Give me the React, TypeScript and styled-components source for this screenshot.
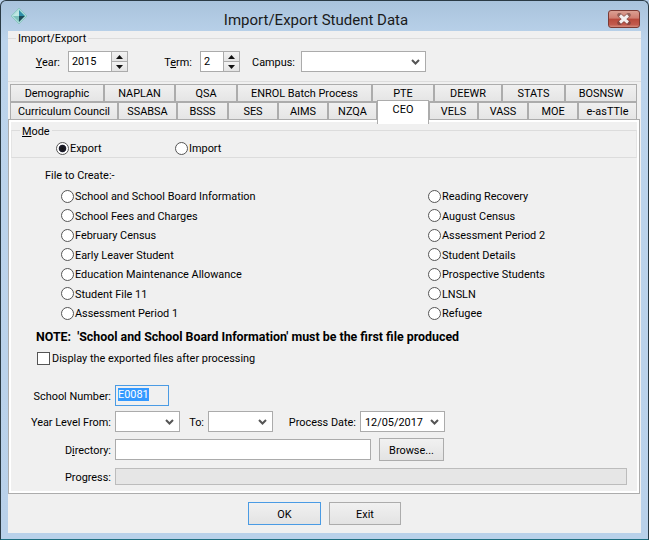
import styled, { createGlobalStyle } from 'styled-components';

const GlobalStyle = createGlobalStyle`
    html, body {
        margin: 0;
        padding: 0;
        background: #b9d1ea;
    }
    * {
        box-sizing: border-box;
    }
`

const Window = styled.div`
    width: 649px;
    height: 540px;
    display: flex;
    flex-direction: column;
    overflow: hidden;
    font-family: Roboto, "Noto Sans", sans-serif;
    font-size: 10.9px;
    color: #000;
    background: linear-gradient(#a9c3dc, #bcd4ec 40px, #b9d1ea);
    border: 1px solid #2a3a44;
    border-bottom-color: #1f6f80;
    border-radius: 6px 6px 0 0;
`

const TitleBar = styled.div`
    height: 30px;
    flex: none;
    display: flex;
    align-items: center;
    padding: 0 8px 0 9px;
`

const Title = styled.div`
    flex: 1;
    text-align: center;
    font-size: 15px;
    color: #1a1a1a;
    padding: 8px 4px 0 0;
`

const CloseButton = styled.div`
    width: 32px;
    height: 18px;
    margin-top: 6px;
    display: flex;
    align-items: center;
    justify-content: center;
    border: 1px solid #7b3a34;
    border-radius: 3px;
    background: linear-gradient(#dba093, #cf7d70 45%, #b8493b 50%, #c25a4e 85%, #d58c7e);
`

const Body = styled.div`
    margin: 0 7px 6px 7px;
    flex: 1;
    display: flex;
    flex-direction: column;
    background: #f0f0f0;
`

const Group = styled.fieldset`
    margin: 0;
    padding: 6px 0 0 0;
    min-width: 0;
    height: 51px;
    border: 1px solid #dcdcdc;
    border-left: none;
    border-right: none;
    display: flex;
    align-items: flex-start;
`

const GroupLegend = styled.legend`
    margin-left: 8px;
    padding: 0 2px;
    height: 14px;
    line-height: 16px;
`

const ModeGroup = styled.fieldset`
    margin: 0 2px 0 0;
    padding: 3px 0 0 0;
    min-width: 0;
    height: 35px;
    border: 1px solid #dcdcdc;
    border-left-color: #e4e4e4;
    border-right-color: #e4e4e4;
    display: flex;
    align-items: flex-start;
`

const ModeLegend = styled.legend`
    margin-left: 8px;
    padding: 0 2px;
    height: 14px;
    line-height: 17px;
`

const FieldLabel = styled.label<{ $width: number; $gap: number }>`
    width: ${props => props.$width}px;
    height: 21px;
    margin-right: ${props => props.$gap}px;
    line-height: 23px;
    text-align: right;
    white-space: nowrap;
`

const SpinBox = styled.div<{ $width: number }>`
    width: ${props => props.$width}px;
    height: 21px;
    display: flex;
    background: #fff;
    border: 1px solid #ababab;
`

const SpinValue = styled.div`
    flex: 1;
    line-height: 20px;
    padding-left: 3px;
`

const SpinButtons = styled.div`
    width: 16px;
    display: flex;
    flex-direction: column;
    gap: 1px;
    background: #ababab;
    border-left: 1px solid #ababab;
`

const SpinButton = styled.div`
    flex: 1;
    display: flex;
    align-items: center;
    justify-content: center;
    background: linear-gradient(#f2f2f2, #e4e4e4);
`

const Combo = styled.div<{ $width: number }>`
    width: ${props => props.$width}px;
    height: 21px;
    display: flex;
    align-items: center;
    flex: none;
    padding: 0 5px 0 4px;
    background: #fff;
    border: 1px solid #ababab;
`

const ComboValue = styled.div`
    flex: 1;
    padding-top: 1px;
    white-space: nowrap;
`

const Tabs = styled.div`
    margin: 2px 2px 0 2px;
    display: flex;
    flex-direction: column;
`

const TabRow = styled.div`
    height: 18px;
    display: flex;
`

const Tab = styled.div<{ $width: number; $active?: boolean }>`
    width: ${props => props.$width}px;
    height: ${props => (props.$active ? 24 : 18)}px;
    margin-top: ${props => (props.$active ? -2 : 0)}px;
    padding: ${props => (props.$active ? '0 0 7px' : '1px 0 0')};
    z-index: ${props => (props.$active ? 2 : 0)};
    display: flex;
    align-items: center;
    justify-content: center;
    white-space: nowrap;
    background: ${props => (props.$active ? '#fff' : 'linear-gradient(#f0f0f0, #e5e5e5)')};
    border: 1px solid #acacac;
    border-bottom: ${props => (props.$active ? 'none' : '1px solid #acacac')};
`

const Panel = styled.div`
    height: 375px;
    margin: -1px 1px 0 0;
    z-index: 1;
    display: flex;
    flex-direction: column;
    padding: 3px 0 0 2px;
    background: #f0f0f0;
    border: 1px solid #acacac;
    box-shadow: inset 0 0 0 2px #fff;
`

const ModeRadios = styled.div`
    margin-left: 44px;
    display: grid;
    grid-template-columns: 119px auto;
`

const FilesHeading = styled.div`
    margin: 8px 0 0 34px;
    line-height: 20px;
    height: 16px;
`

const FileGrid = styled.div`
    margin: 6px 0 0 50px;
    display: grid;
    grid-template-columns: 367px 1fr;
`

const FileColumn = styled.div`
    display: flex;
    flex-direction: column;
    gap: 3.5px;
`

const RadioRow = styled.div`
    height: 16px;
    display: flex;
    align-items: center;
    gap: 1px;
    white-space: nowrap;
`

const RadioText = styled.span`
    padding-top: 1px;
`

const RadioDot = styled.span<{ $checked?: boolean }>`
    width: 13px;
    height: 13px;
    flex: none;
    border-radius: 50%;
    border: 1px solid #555;
    background: ${props => (props.$checked
        ? 'radial-gradient(circle, #111 0, #1c1c2c 3.4px, #fff 4.2px)'
        : '#fff')};
`

const Note = styled.div`
    margin: 8px 0 0 25px;
    line-height: 16px;
    font-weight: 700;
    font-size: 12.4px;
`

const CheckRow = styled.div`
    margin: 6px 0 0 26px;
    height: 14px;
    display: flex;
    align-items: center;
    gap: 2px;
`

const CheckBox = styled.span`
    width: 13px;
    height: 13px;
    flex: none;
    background: #fff;
    border: 1px solid #555;
`

const FormRow = styled.div<{ $top: number }>`
    margin-top: ${props => props.$top}px;
    display: flex;
    align-items: center;
`

const SelectedInput = styled.div`
    width: 54px;
    height: 21px;
    padding: 2px;
    background: #f0f0f0;
    border: 1px solid #4a9be4;
`

const SelectedText = styled.span`
    display: block;
    width: 31px;
    height: 13px;
    line-height: 14px;
    color: #fff;
    background: #3399ff;
`

const TextInput = styled.div`
    width: 256px;
    height: 21px;
    background: #fff;
    border: 1px solid #ababab;
`

const ProgressBar = styled.div`
    width: 512px;
    height: 17px;
    background: #e6e6e6;
    border: 1px solid #bcbcbc;
`

const Button = styled.div<{ $width: number; $focused?: boolean }>`
    width: ${props => props.$width}px;
    height: 23px;
    padding-top: 1px;
    display: flex;
    align-items: center;
    justify-content: center;
    background: linear-gradient(#f1f1f1, #e3e3e3);
    border: 1px solid ${props => (props.$focused ? '#4a9be4' : '#acacac')};
`

const BrowseButton = styled(Button)`
    margin-left: 8px;
`

const Footer = styled.div`
    margin: 8px 0 0 240px;
    display: flex;
    gap: 8px;
`

const upperTabs = [
    { label: 'Demographic', width: 94 },
    { label: 'NAPLAN', width: 71 },
    { label: 'QSA', width: 62 },
    { label: 'ENROL Batch Process', width: 135 },
    { label: 'PTE', width: 62 },
    { label: 'DEEWR', width: 68 },
    { label: 'STATS', width: 63 },
    { label: 'BOSNSW', width: 72 },
]

const lowerTabs = [
    { label: 'Curriculum Council', width: 108 },
    { label: 'SSABSA', width: 59 },
    { label: 'BSSS', width: 51 },
    { label: 'SES', width: 50 },
    { label: 'AIMS', width: 50 },
    { label: 'NZQA', width: 49 },
    { label: 'CEO', width: 52, active: true },
    { label: 'VELS', width: 49 },
    { label: 'VASS', width: 50 },
    { label: 'MOE', width: 50 },
    { label: 'e-asTTle', width: 59 },
]

const leftFiles = [
    'School and School Board Information',
    'School Fees and Charges',
    'February Census',
    'Early Leaver Student',
    'Education Maintenance Allowance',
    'Student File 11',
    'Assessment Period 1',
]

const rightFiles = [
    'Reading Recovery',
    'August Census',
    'Assessment Period 2',
    'Student Details',
    'Prospective Students',
    'LNSLN',
    'Refugee',
]

function AppIcon() {
    return (
        <svg width="18" height="18" viewBox="0 0 18 18">
            <path d="M9 1 L17 9 L9 17 L1 9 Z" fill="#a9dcd8" stroke="#8fc4c4" />
            <path d="M9 3 L15 9 L9 9 Z" fill="#2f8fa8" />
            <path d="M9 3 L3 9 L9 9 Z" fill="#bfe6e2" />
            <path d="M3 9 L9 15 L9 9 Z" fill="#7cc0bb" />
            <path d="M15 9 L9 15 L9 9 Z" fill="#1c4a58" />
        </svg>
    )
}

function CloseIcon() {
    return (
        <svg width="16" height="12" viewBox="0 0 16 12">
            <path d="M3.5 2 L12.5 10 M12.5 2 L3.5 10" stroke="#5d3a38" strokeWidth="4.4" strokeLinecap="round" opacity="0.55" />
            <path d="M4 2.5 L12 9.5 M12 2.5 L4 9.5" stroke="#f4f0f0" strokeWidth="3" />
        </svg>
    )
}

function Arrow({ down }: { down?: boolean }) {
    return (
        <svg width="7" height="4" viewBox="0 0 7 4">
            <path d={down ? 'M0 0 H7 L3.5 4 Z' : 'M0 4 H7 L3.5 0 Z'} fill="#111" />
        </svg>
    )
}

function Chevron() {
    return (
        <svg width="9" height="6" viewBox="0 0 9 6">
            <path d="M1 1 L4.5 4.5 L8 1" fill="none" stroke="#555" strokeWidth="2" />
        </svg>
    )
}

function Spin({ value, width }: { value: string; width: number }) {
    return (
        <SpinBox $width={width}>
            <SpinValue>{value}</SpinValue>
            <SpinButtons>
                <SpinButton><Arrow /></SpinButton>
                <SpinButton><Arrow down /></SpinButton>
            </SpinButtons>
        </SpinBox>
    )
}

function Select({ value, width }: { value?: string; width: number }) {
    return (
        <Combo $width={width}>
            <ComboValue>{value}</ComboValue>
            <Chevron />
        </Combo>
    )
}

function FileRadios({ items }: { items: string[] }) {
    return (
        <FileColumn>
            {items.map(item => (
                <RadioRow key={item}><RadioDot /><RadioText>{item}</RadioText></RadioRow>
            ))}
        </FileColumn>
    )
}

export default function App() {
    return <>
        <GlobalStyle />
        <Window>
            <TitleBar>
                <AppIcon />
                <Title>Import/Export Student Data</Title>
                <CloseButton><CloseIcon /></CloseButton>
            </TitleBar>
            <Body>
                <Group>
                    <GroupLegend>Import/Export</GroupLegend>
                    <FieldLabel $width={52} $gap={8}><u>Y</u>ear:</FieldLabel>
                    <Spin value="2015" width={60} />
                    <FieldLabel $width={64} $gap={8}>T<u>e</u>rm:</FieldLabel>
                    <Spin value="2" width={40} />
                    <FieldLabel $width={55} $gap={6}>Campus:</FieldLabel>
                    <Select width={125} />
                </Group>
                <Tabs>
                    <TabRow>
                        {upperTabs.map(tab => (
                            <Tab key={tab.label} $width={tab.width}>{tab.label}</Tab>
                        ))}
                    </TabRow>
                    <TabRow>
                        {lowerTabs.map(tab => (
                            <Tab key={tab.label} $width={tab.width} $active={tab.active}>{tab.label}</Tab>
                        ))}
                    </TabRow>
                </Tabs>
                <Panel>
                    <ModeGroup>
                        <ModeLegend><u>M</u>ode</ModeLegend>
                        <ModeRadios>
                            <RadioRow><RadioDot $checked /><RadioText>Export</RadioText></RadioRow>
                            <RadioRow><RadioDot /><RadioText>Import</RadioText></RadioRow>
                        </ModeRadios>
                    </ModeGroup>
                    <FilesHeading>File to Create:-</FilesHeading>
                    <FileGrid>
                        <FileRadios items={leftFiles} />
                        <FileRadios items={rightFiles} />
                    </FileGrid>
                    <Note>NOTE:&nbsp; 'School and School Board Information' must be the first file produced</Note>
                    <CheckRow>
                        <CheckBox />
                        <RadioText>Display the exported files after processing</RadioText>
                    </CheckRow>
                    <FormRow $top={20}>
                        <FieldLabel $width={100} $gap={4}>School Number:</FieldLabel>
                        <SelectedInput><SelectedText>E0081</SelectedText></SelectedInput>
                    </FormRow>
                    <FormRow $top={5}>
                        <FieldLabel $width={100} $gap={4}>Year Level From:</FieldLabel>
                        <Select width={65} />
                        <FieldLabel $width={24} $gap={4}>To:</FieldLabel>
                        <Select width={65} />
                        <FieldLabel $width={83} $gap={4}>Process Date:</FieldLabel>
                        <Select value="12/05/2017" width={85} />
                    </FormRow>
                    <FormRow $top={6}>
                        <FieldLabel $width={100} $gap={4}>D<u>i</u>rectory:</FieldLabel>
                        <TextInput />
                        <BrowseButton $width={65}>Browse...</BrowseButton>
                    </FormRow>
                    <FormRow $top={5}>
                        <FieldLabel $width={100} $gap={4}>Progress:</FieldLabel>
                        <ProgressBar />
                    </FormRow>
                </Panel>
                <Footer>
                    <Button $width={73} $focused>OK</Button>
                    <Button $width={72}>Exit</Button>
                </Footer>
            </Body>
        </Window>
    </>
}
